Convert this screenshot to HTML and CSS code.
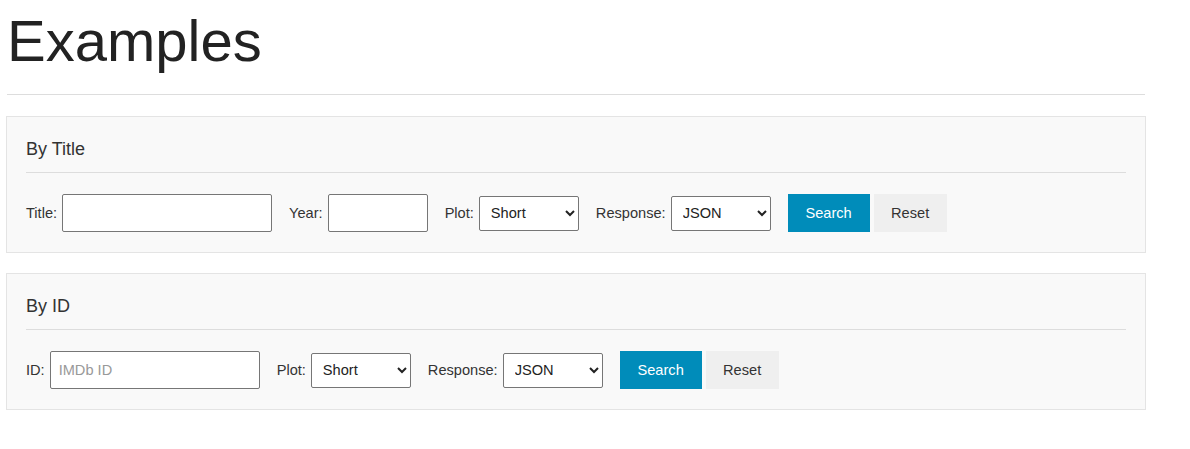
FILE: index.html
```html
<!DOCTYPE html>
<html lang="en">
<head>
<meta charset="utf-8">
<title>Examples</title>
<link rel="stylesheet" href="styles.css">
</head>
<body>
<div class="page">
  <h1 class="title">Examples</h1>
  <hr class="rule">

  <section class="panel">
    <h5 class="panel-title">By Title</h5>
    <hr class="panel-rule">
    <form class="row">
      <div class="field">
        <label class="lbl" for="t">Title:</label>
        <input class="txt txt-wide" id="t" type="text">
      </div>
      <div class="field">
        <label class="lbl" for="y">Year:</label>
        <input class="txt txt-narrow" id="y" type="text">
      </div>
      <div class="field">
        <label class="lbl" for="p1">Plot:</label>
        <select class="sel" id="p1"><option>Short</option><option>Full</option></select>
      </div>
      <div class="field">
        <label class="lbl" for="r1">Response:</label>
        <select class="sel" id="r1"><option>JSON</option><option>XML</option></select>
      </div>
      <div class="buttons">
        <button type="button" class="btn btn-primary">Search</button>
        <button type="button" class="btn btn-secondary">Reset</button>
      </div>
    </form>
  </section>

  <section class="panel">
    <h5 class="panel-title">By ID</h5>
    <hr class="panel-rule">
    <form class="row">
      <div class="field">
        <label class="lbl" for="i">ID:</label>
        <input class="txt txt-wide" id="i" type="text" placeholder="IMDb ID">
      </div>
      <div class="field">
        <label class="lbl" for="p2">Plot:</label>
        <select class="sel" id="p2"><option>Short</option><option>Full</option></select>
      </div>
      <div class="field">
        <label class="lbl" for="r2">Response:</label>
        <select class="sel" id="r2"><option>JSON</option><option>XML</option></select>
      </div>
      <div class="buttons">
        <button type="button" class="btn btn-primary">Search</button>
        <button type="button" class="btn btn-secondary">Reset</button>
      </div>
    </form>
  </section>
</div>
</body>
</html>
```

FILE: styles.css
```css
html, body {
  margin: 0;
  padding: 0;
  background: #ffffff;
}

body {
  font-family: "Liberation Sans", Arial, Helvetica, sans-serif;
  color: #222222;
}

.page {
  width: 1140px;
  padding: 5px 0 0 6px;
}

.title {
  margin: 0 0 17px 1px;
  font-size: 58px;
  font-weight: 400;
  line-height: 72px;
  color: #222222;
}

.rule {
  margin: 0 0 21px 1px;
  border: 0;
  border-top: 1px solid #dddddd;
  height: 0;
  width: 1138px;
}

.panel {
  box-sizing: border-box;
  width: 1140px;
  margin: 0 0 20px 0;
  padding: 20px 19px;
  background: #f9f9f9;
  border: 1px solid #e4e4e4;
}

.panel-title {
  margin: 0 0 10px 0;
  font-size: 18px;
  font-weight: 400;
  line-height: 25px;
  color: #333333;
}

.panel-rule {
  margin: 0 0 21px 0;
  border: 0;
  border-top: 1px solid #dddddd;
  height: 0;
}

.row {
  display: flex;
  align-items: center;
  gap: 17px;
  margin: 0;
  height: 38px;
}

.field {
  display: flex;
  align-items: center;
  gap: 5px;
}

.lbl {
  font-size: 14.6px;
  color: #333333;
}

.txt {
  box-sizing: border-box;
  height: 38px;
  margin: 0;
  padding: 0 8px;
  border: 1px solid #767676;
  border-radius: 2px;
  background: #ffffff;
  font-family: "Liberation Sans", Arial, sans-serif;
  font-size: 14.6px;
  color: #222222;
}

.txt::placeholder {
  color: #999999;
}

.txt-wide {
  width: 210px;
}

.txt-narrow {
  width: 100px;
}

.sel {
  box-sizing: border-box;
  width: 100px;
  height: 35px;
  margin: 0;
  padding: 0 4px 0 7px;
  border: 1px solid #767676;
  border-radius: 2px;
  background-color: #ffffff;
  font-family: "Liberation Sans", Arial, sans-serif;
  font-size: 14.6px;
  color: #222222;
}

.buttons {
  display: flex;
  align-items: center;
  gap: 4px;
}

.btn {
  box-sizing: border-box;
  height: 38px;
  margin: 0;
  border: 0;
  border-radius: 0;
  font-family: "Liberation Sans", Arial, sans-serif;
  font-size: 14.6px;
  cursor: pointer;
}

.btn-primary {
  width: 82px;
  background: #008cba;
  color: #ffffff;
}

.btn-secondary {
  width: 73px;
  background: #efefef;
  color: #333333;
}
```
